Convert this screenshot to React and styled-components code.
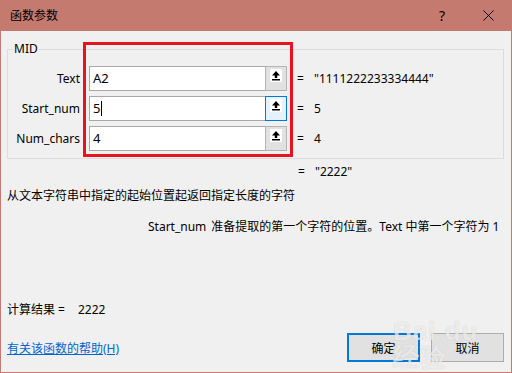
import React from "react";
import styled, { createGlobalStyle } from "styled-components";

const GlobalStyle = createGlobalStyle`
  html, body {
    margin: 0;
    padding: 0;
    background: #f0f0f0;
  }
  body {
    font-family: "Segoe UI", "Noto Sans", "Noto Sans CJK SC", sans-serif;
    font-size: 12px;
    color: #000;
  }
`;

const Window = styled.div`
  position: relative;
  width: 512px;
  height: 373px;
  box-sizing: border-box;
  border: 1px solid #c47a6e;
  border-top: none;
  background: #f0f0f0;
  display: flex;
  flex-direction: column;
  overflow: hidden;
`;

const TitleBar = styled.div`
  height: 31px;
  background: #c47a6e;
  display: flex;
  align-items: center;
  padding-left: 9px;
`;

const Title = styled.span`
  flex: 1;
  font-size: 12px;
  line-height: 16px;
`;

const CaptionButton = styled.div`
  width: 46px;
  height: 31px;
  display: flex;
  align-items: center;
  justify-content: center;
  font-size: 14px;
`;

const Body = styled.div`
  flex: 1;
  display: flex;
  flex-direction: column;
  padding: 0 7px 0 6px;
`;

const GroupBox = styled.div`
  position: relative;
  margin-top: 18px;
  border: 1px solid #dcdcdc;
  display: flex;
  align-items: flex-start;
  padding-bottom: 1px;
`;

const Legend = styled.span`
  position: absolute;
  top: -9px;
  left: 5px;
  padding: 0 1px;
  line-height: 16px;
  background: #f0f0f0;
`;

const Column = styled.div`
  display: flex;
  flex-direction: column;
  gap: 5px;
  padding-top: 16px;
  width: ${(p) => p.width || "auto"};
  margin-left: ${(p) => p.offset || "0"};
`;

const ArgLabel = styled.div`
  height: 25px;
  line-height: 25px;
  text-align: right;
`;

const Highlight = styled.div`
  margin: -8px 0 0 3px;
  border: 3px solid #e8131f;
  padding: 21px 3px 3px;
  display: flex;
  flex-direction: column;
  gap: 5px;
`;

const InputBox = styled.div`
  width: 198px;
  height: 25px;
  box-sizing: border-box;
  border: 1px solid #a9a9a9;
  background: #fff;
  display: flex;
`;

const InputText = styled.div`
  flex: 1;
  padding-left: 3px;
  line-height: 23px;
  font-size: 13px;
  display: flex;
  align-items: center;
`;

const Caret = styled.span`
  display: inline-block;
  width: 1px;
  height: 15px;
  background: #000;
  margin-left: 1px;
`;

const RefButton = styled.div`
  width: 22px;
  box-sizing: border-box;
  border: 1px solid ${(p) => (p.focused ? "#0078d7" : "#b4b4b4")};
  background: ${(p) => (p.focused ? "#e5f1fb" : "#e1e1e1")};
  margin: -1px -1px -1px 0;
  display: flex;
  justify-content: center;
  align-items: flex-start;
  padding-top: 2px;
`;

const ValueRow = styled.div`
  height: 25px;
  display: flex;
  align-items: center;
`;

const Equals = styled.span`
  width: 17px;
  flex: none;
`;

const FormulaRow = styled.div`
  margin-top: 5px;
  padding-left: 291px;
  line-height: 16px;
  display: flex;
`;

const Description = styled.div`
  margin-top: 8px;
  line-height: 16px;
`;

const Detail = styled.div`
  margin-top: 15px;
  padding-left: 141px;
  line-height: 16px;
  display: flex;
  gap: 5px;
  white-space: nowrap;
`;

const Result = styled.div`
  margin-top: 67px;
  line-height: 16px;
  display: flex;
  gap: 13px;
`;

const Footer = styled.div`
  margin-top: 15px;
  height: 29px;
  display: flex;
  align-items: center;
  gap: 11px;
`;

const HelpLink = styled.a`
  flex: 1;
  color: #0066cc;
  text-decoration: underline;
  cursor: pointer;
`;

const DialogButton = styled.button`
  width: 73px;
  height: 29px;
  box-sizing: border-box;
  border: ${(p) => (p.primary ? "2px solid #0078d7" : "1px solid #adadad")};
  background: #e1e1e1;
  font-family: inherit;
  font-size: 12px;
  color: #000;
  padding: 0;
`;

const Watermark = styled.div`
  position: absolute;
  left: 392px;
  top: 318px;
  color: rgba(255, 255, 255, 0.7);
  text-shadow: 0 0 1px rgba(0, 0, 0, 0.2);
  pointer-events: none;
  line-height: 1;
`;

const WatermarkBig = styled.div`
  font-family: "Liberation Sans", sans-serif;
  font-size: 26px;
  font-weight: bold;
  letter-spacing: 1px;
`;

const WatermarkSmall = styled.div`
  font-family: "Liberation Sans", sans-serif;
  font-size: 11px;
  margin-top: 3px;
  letter-spacing: 0.5px;
`;

const RefIcon = () => (
  <svg width="12" height="13" viewBox="0 0 12 13">
    <rect width="12" height="13" fill="#fff" />
    <path d="M6 2 L2 6.5 H4.8 V9 H7.2 V6.5 H10 Z" fill="#000" />
    <rect x="2" y="10" width="8" height="1.5" fill="#000" />
  </svg>
);

const CloseIcon = () => (
  <svg width="11" height="11" viewBox="0 0 11 11">
    <path d="M0.5 0.5 L10.5 10.5 M10.5 0.5 L0.5 10.5" stroke="#000" strokeWidth="1" />
  </svg>
);

const args = [
  { name: "Text", input: "A2", value: '"1111222233334444"' },
  { name: "Start_num", input: "5", value: "5", focused: true },
  { name: "Num_chars", input: "4", value: "4" },
];

export default function App() {
  return (
    <>
      <GlobalStyle />
      <Window>
        <TitleBar>
          <Title>函数参数</Title>
          <CaptionButton>?</CaptionButton>
          <CaptionButton>
            <CloseIcon />
          </CaptionButton>
        </TitleBar>
        <Body>
          <GroupBox>
            <Legend>MID</Legend>
            <Column width="72px" offset="0">
              {args.map((a) => (
                <ArgLabel key={a.name}>{a.name}</ArgLabel>
              ))}
            </Column>
            <Highlight>
              {args.map((a) => (
                <InputBox key={a.name}>
                  <InputText>
                    {a.input}
                    {a.focused && <Caret />}
                  </InputText>
                  <RefButton focused={a.focused}>
                    <RefIcon />
                  </RefButton>
                </InputBox>
              ))}
            </Highlight>
            <Column offset="4px">
              {args.map((a) => (
                <ValueRow key={a.name}>
                  <Equals>=</Equals>
                  {a.value}
                </ValueRow>
              ))}
            </Column>
          </GroupBox>
          <FormulaRow>
            <Equals>=</Equals>
            "2222"
          </FormulaRow>
          <Description>从文本字符串中指定的起始位置起返回指定长度的字符</Description>
          <Detail>
            <span>Start_num</span>
            <span>准备提取的第一个字符的位置。Text 中第一个字符为 1</span>
          </Detail>
          <Result>
            <span>计算结果 =</span>
            <span>2222</span>
          </Result>
          <Footer>
            <HelpLink>有关该函数的帮助(H)</HelpLink>
            <DialogButton primary>确定</DialogButton>
            <DialogButton>取消</DialogButton>
          </Footer>
        </Body>
        <Watermark>
          <WatermarkBig>Bai du 经验</WatermarkBig>
          <WatermarkSmall>jingyan.baidu.com</WatermarkSmall>
        </Watermark>
      </Window>
    </>
  );
}
